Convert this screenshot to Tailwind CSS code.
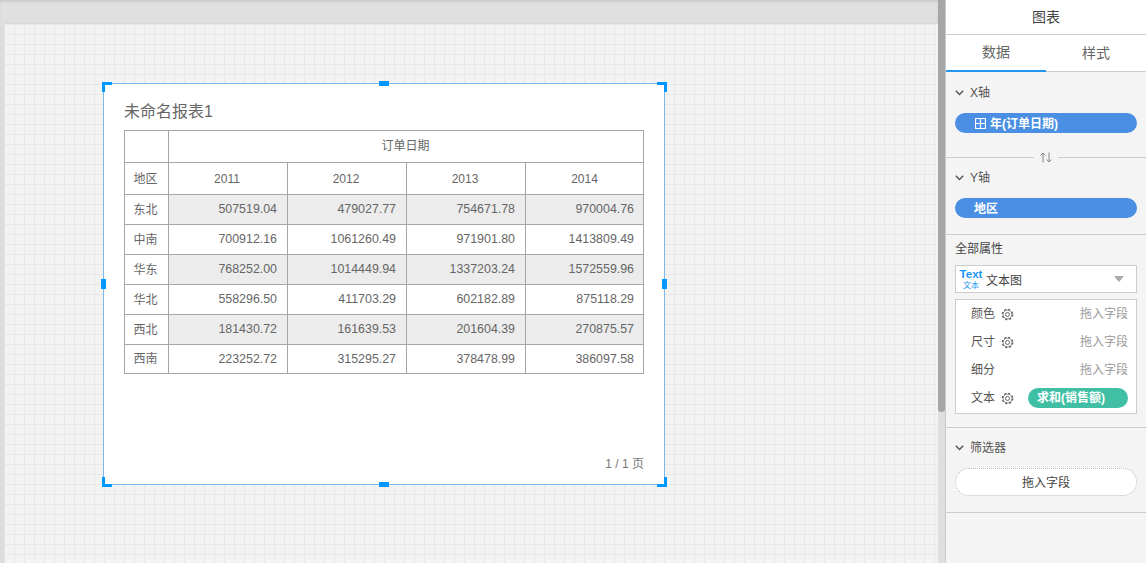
<!DOCTYPE html>
<html lang="zh">
<head>
<meta charset="UTF-8">
<title>报表</title>
<script src="https://cdn.jsdelivr.net/npm/@tailwindcss/browser@4"></script>
</head>
<body class="h-[563px] w-[1146px] overflow-hidden font-['Liberation_Sans','Noto_Sans_CJK_SC',sans-serif] text-[12px] text-[#555]">
<div class="flex h-full">
  <!-- Canvas -->
  <main class="w-[938px] shrink-0 h-full bg-[#e0e0e0] pt-6 pl-1 overflow-hidden shadow-[inset_0_2px_2px_#ccc]">
    <div class="relative h-full bg-[#f3f3f3] bg-[linear-gradient(#e8e8e8_1px,transparent_1px),linear-gradient(90deg,#e8e8e8_1px,transparent_1px)] bg-size-[10px_10px] shadow-[0_0_3px_#ccc]">
      <!-- Report -->
      <div class="absolute left-[99px] top-[59px] w-[562px] h-[402px] bg-white border border-[#7ab8ee] px-5 pt-[17px]">
        <h1 class="text-[16px] leading-[22px] h-[29px] text-[#666]">未命名报表1</h1>
        <table class="border-collapse table-fixed w-[519px] text-[#666]">
          <colgroup><col class="w-[44px]"><col class="w-[119px]"><col class="w-[119px]"><col class="w-[119px]"><col class="w-[118px]"></colgroup>
          <tbody>
            <tr class="h-[32px]"><td class="border border-[#a6a6a6]"></td><td colspan="4" class="border border-[#a6a6a6] text-center pb-[1px] pr-[1px]">订单日期</td></tr>
            <tr class="h-[32px] text-center">
              <td class="border border-[#a6a6a6] pr-[2px]">地区</td>
              <td class="border border-[#a6a6a6] pr-[2px]">2011</td>
              <td class="border border-[#a6a6a6] pr-[2px]">2012</td>
              <td class="border border-[#a6a6a6] pr-[2px]">2013</td>
              <td class="border border-[#a6a6a6]">2014</td>
            </tr>
            <tr class="h-[30px] text-right text-[12.4px]">
              <td class="border border-[#a6a6a6] text-center text-[12px] pr-[2px]">东北</td>
              <td class="border border-[#a6a6a6] bg-[#ececec] pr-[10px]">507519.04</td>
              <td class="border border-[#a6a6a6] bg-[#ececec] pr-[10px]">479027.77</td>
              <td class="border border-[#a6a6a6] bg-[#ececec] pr-[10px]">754671.78</td>
              <td class="border border-[#a6a6a6] bg-[#ececec] pr-[9px]">970004.76</td>
            </tr>
            <tr class="h-[30px] text-right text-[12.4px]">
              <td class="border border-[#a6a6a6] text-center text-[12px] pr-[2px]">中南</td>
              <td class="border border-[#a6a6a6] pr-[10px]">700912.16</td>
              <td class="border border-[#a6a6a6] pr-[10px]">1061260.49</td>
              <td class="border border-[#a6a6a6] pr-[10px]">971901.80</td>
              <td class="border border-[#a6a6a6] pr-[9px]">1413809.49</td>
            </tr>
            <tr class="h-[30px] text-right text-[12.4px]">
              <td class="border border-[#a6a6a6] text-center text-[12px] pr-[2px]">华东</td>
              <td class="border border-[#a6a6a6] bg-[#ececec] pr-[10px]">768252.00</td>
              <td class="border border-[#a6a6a6] bg-[#ececec] pr-[10px]">1014449.94</td>
              <td class="border border-[#a6a6a6] bg-[#ececec] pr-[10px]">1337203.24</td>
              <td class="border border-[#a6a6a6] bg-[#ececec] pr-[9px]">1572559.96</td>
            </tr>
            <tr class="h-[30px] text-right text-[12.4px]">
              <td class="border border-[#a6a6a6] text-center text-[12px] pr-[2px]">华北</td>
              <td class="border border-[#a6a6a6] pr-[10px]">558296.50</td>
              <td class="border border-[#a6a6a6] pr-[10px]">411703.29</td>
              <td class="border border-[#a6a6a6] pr-[10px]">602182.89</td>
              <td class="border border-[#a6a6a6] pr-[9px]">875118.29</td>
            </tr>
            <tr class="h-[30px] text-right text-[12.4px]">
              <td class="border border-[#a6a6a6] text-center text-[12px] pr-[2px]">西北</td>
              <td class="border border-[#a6a6a6] bg-[#ececec] pr-[10px]">181430.72</td>
              <td class="border border-[#a6a6a6] bg-[#ececec] pr-[10px]">161639.53</td>
              <td class="border border-[#a6a6a6] bg-[#ececec] pr-[10px]">201604.39</td>
              <td class="border border-[#a6a6a6] bg-[#ececec] pr-[9px]">270875.57</td>
            </tr>
            <tr class="h-[29px] text-right text-[12.4px]">
              <td class="border border-[#a6a6a6] text-center text-[12px] pr-[2px]">西南</td>
              <td class="border border-[#a6a6a6] pr-[10px]">223252.72</td>
              <td class="border border-[#a6a6a6] pr-[10px]">315295.27</td>
              <td class="border border-[#a6a6a6] pr-[10px]">378478.99</td>
              <td class="border border-[#a6a6a6] pr-[9px]">386097.58</td>
            </tr>
          </tbody>
        </table>
        <div class="absolute right-[20px] bottom-[12px] text-[#777] leading-[16px]">1 / 1 页</div>

        <!-- Selection handles -->
        <div class="absolute -left-[2px] -top-[2px] w-[10px] h-[3px] bg-[#0098ff]"></div>
        <div class="absolute -left-[2px] -top-[2px] w-[3px] h-[10px] bg-[#0098ff]"></div>
        <div class="absolute -right-[3px] -top-[2px] w-[10px] h-[3px] bg-[#0098ff]"></div>
        <div class="absolute -right-[3px] -top-[2px] w-[3px] h-[10px] bg-[#0098ff]"></div>
        <div class="absolute -left-[2px] -bottom-[3px] w-[10px] h-[3px] bg-[#0098ff]"></div>
        <div class="absolute -left-[2px] -bottom-[3px] w-[3px] h-[10px] bg-[#0098ff]"></div>
        <div class="absolute -right-[3px] -bottom-[3px] w-[10px] h-[3px] bg-[#0098ff]"></div>
        <div class="absolute -right-[3px] -bottom-[3px] w-[3px] h-[10px] bg-[#0098ff]"></div>
        <div class="absolute left-[275px] -top-[3px] w-[10px] h-[5px] bg-[#0098ff]"></div>
        <div class="absolute left-[275px] -bottom-[3px] w-[10px] h-[5px] bg-[#0098ff]"></div>
        <div class="absolute -left-[3px] top-[195px] w-[5px] h-[10px] bg-[#0098ff]"></div>
        <div class="absolute -right-[3px] top-[195px] w-[5px] h-[10px] bg-[#0098ff]"></div>
      </div>
    </div>
  </main>

  <!-- Scrollbar -->
  <div class="w-[7px] shrink-0 h-full bg-[#dfdfdf]">
    <div class="h-[412px] bg-[#a6a6a6] rounded-b-[3px]"></div>
  </div>

  <!-- Side panel -->
  <aside class="w-[201px] shrink-0 h-full bg-[#f4f4f4] border-l border-[#c8c8c8] text-[#555]">
    <div class="h-[35px] bg-white border-b border-[#ccc] flex items-center justify-center text-[14px] text-[#444]">图表</div>
    <div class="h-[37px] bg-white border-b border-[#ccc] flex text-[14px] text-[#666]">
      <div class="w-[100px] h-[37px] border-b-2 border-[#2196f3] flex items-center justify-center">数据</div>
      <div class="w-[100px] flex items-center justify-center pt-[1px]">样式</div>
    </div>

    <section class="h-[86px] relative border-b border-[#ccc] px-[9px]">
      <div class="h-[41px] flex items-center gap-[6px]">
        <svg class="w-[9px] h-[6px]" viewBox="0 0 9 6" fill="none" stroke="#555" stroke-width="1.5"><path d="M.8.8 4.5 4.5 8.2.8"/></svg>
        <span>X轴</span>
      </div>
      <div class="h-[20px] w-[182px] rounded-full bg-[#4a8fe3] text-white font-bold flex items-center pl-[20px] gap-[4px]">
        <svg class="w-[11px] h-[11px]" viewBox="0 0 11 11" fill="none" stroke="#fff" stroke-width="1.2"><path d="M.5.5h10v10H.5zM.5 5.500h10M5.500.5v10"/></svg>
        <span class="pt-[1px]">年(订单日期)</span>
      </div>
      <div class="absolute left-[88px] -bottom-[7px] w-[24px] h-[13px] bg-[#f4f4f4] flex items-center justify-center">
        <svg class="w-[14px] h-[11px]" viewBox="0 0 14 11" fill="none" stroke="#888" stroke-width="1"><path d="M4 10.500V1M1.500 3.500 4 1l2.500 2.500M10 .5V10M7.500 7.500 10 10l2.500-2.500"/></svg>
      </div>
    </section>

    <section class="h-[77px] border-b border-[#ccc] px-[9px]">
      <div class="h-[40px] flex items-center gap-[6px]">
        <svg class="w-[9px] h-[6px]" viewBox="0 0 9 6" fill="none" stroke="#555" stroke-width="1.5"><path d="M.8.8 4.5 4.5 8.2.8"/></svg>
        <span>Y轴</span>
      </div>
      <div class="h-[20px] w-[182px] rounded-full bg-[#4a8fe3] text-white font-bold flex items-center pl-[19px] pt-[1px]">地区</div>
    </section>

    <section class="h-[193px] border-b border-[#ccc] px-[9px] pt-[5px]">
      <div class="h-[18px] leading-[18px] text-[#444]">全部属性</div>
      <div class="mt-[7px] h-[28px] w-[182px] bg-white border border-[#ccc] flex items-center pl-[3px]">
        <div class="w-[23px] flex flex-col items-center text-[#2196f3] mr-[4px] pl-[1px] pt-[1px]">
          <span class="font-bold text-[11.5px] leading-[11px]">Text</span>
          <span class="text-[8px] leading-[9px] mt-[1px]">文本</span>
        </div>
        <span class="text-[#444] pt-[4px]">文本图</span>
        <svg class="ml-auto mr-[12px] w-[10px] h-[6px]" viewBox="0 0 10 6" fill="#aaa"><path d="M0 0h10L5 6z"/></svg>
      </div>
      <div class="mt-[6px] h-[115px] w-[182px] bg-white border border-[#ccc] pl-[15px] pr-[8px] flex flex-col">
        <div class="h-[28px] flex items-center gap-[6px]">
          <span>颜色</span>
          <svg class="w-[13px] h-[13px]" viewBox="0 0 13 13" fill="none" stroke="#666"><circle cx="6.500" cy="6.500" r="5.200" stroke-width="1.300" stroke-dasharray="2.100 2"/><circle cx="6.500" cy="6.500" r="4.400" stroke-width=".8"/><circle cx="6.500" cy="6.500" r="2" stroke-width="1"/></svg>
          <span class="ml-auto text-[#999]">拖入字段</span>
        </div>
        <div class="h-[28px] flex items-center gap-[6px]">
          <span>尺寸</span>
          <svg class="w-[13px] h-[13px]" viewBox="0 0 13 13" fill="none" stroke="#666"><circle cx="6.500" cy="6.500" r="5.200" stroke-width="1.300" stroke-dasharray="2.100 2"/><circle cx="6.500" cy="6.500" r="4.400" stroke-width=".8"/><circle cx="6.500" cy="6.500" r="2" stroke-width="1"/></svg>
          <span class="ml-auto text-[#999]">拖入字段</span>
        </div>
        <div class="h-[28px] flex items-center">
          <span>细分</span>
          <span class="ml-auto text-[#999]">拖入字段</span>
        </div>
        <div class="h-[28px] flex items-center gap-[6px]">
          <span>文本</span>
          <svg class="w-[13px] h-[13px]" viewBox="0 0 13 13" fill="none" stroke="#666"><circle cx="6.500" cy="6.500" r="5.200" stroke-width="1.300" stroke-dasharray="2.100 2"/><circle cx="6.500" cy="6.500" r="4.400" stroke-width=".8"/><circle cx="6.500" cy="6.500" r="2" stroke-width="1"/></svg>
          <div class="ml-auto h-[20px] w-[100px] rounded-full bg-[#40bfa5] text-white font-bold flex items-center pl-[9px]">求和(销售额)</div>
        </div>
      </div>
    </section>

    <section class="h-[85px] border-b border-[#ccc] px-[9px]">
      <div class="h-[40px] flex items-center gap-[6px]">
        <svg class="w-[9px] h-[6px]" viewBox="0 0 9 6" fill="none" stroke="#555" stroke-width="1.5"><path d="M.8.8 4.5 4.5 8.2.8"/></svg>
        <span>筛选器</span>
      </div>
      <div class="h-[28px] w-[182px] rounded-full bg-white border border-dotted border-[#bbb] flex items-center justify-center text-[#444] pt-[1px]">拖入字段</div>
    </section>
  </aside>
</div>
</body>
</html>
